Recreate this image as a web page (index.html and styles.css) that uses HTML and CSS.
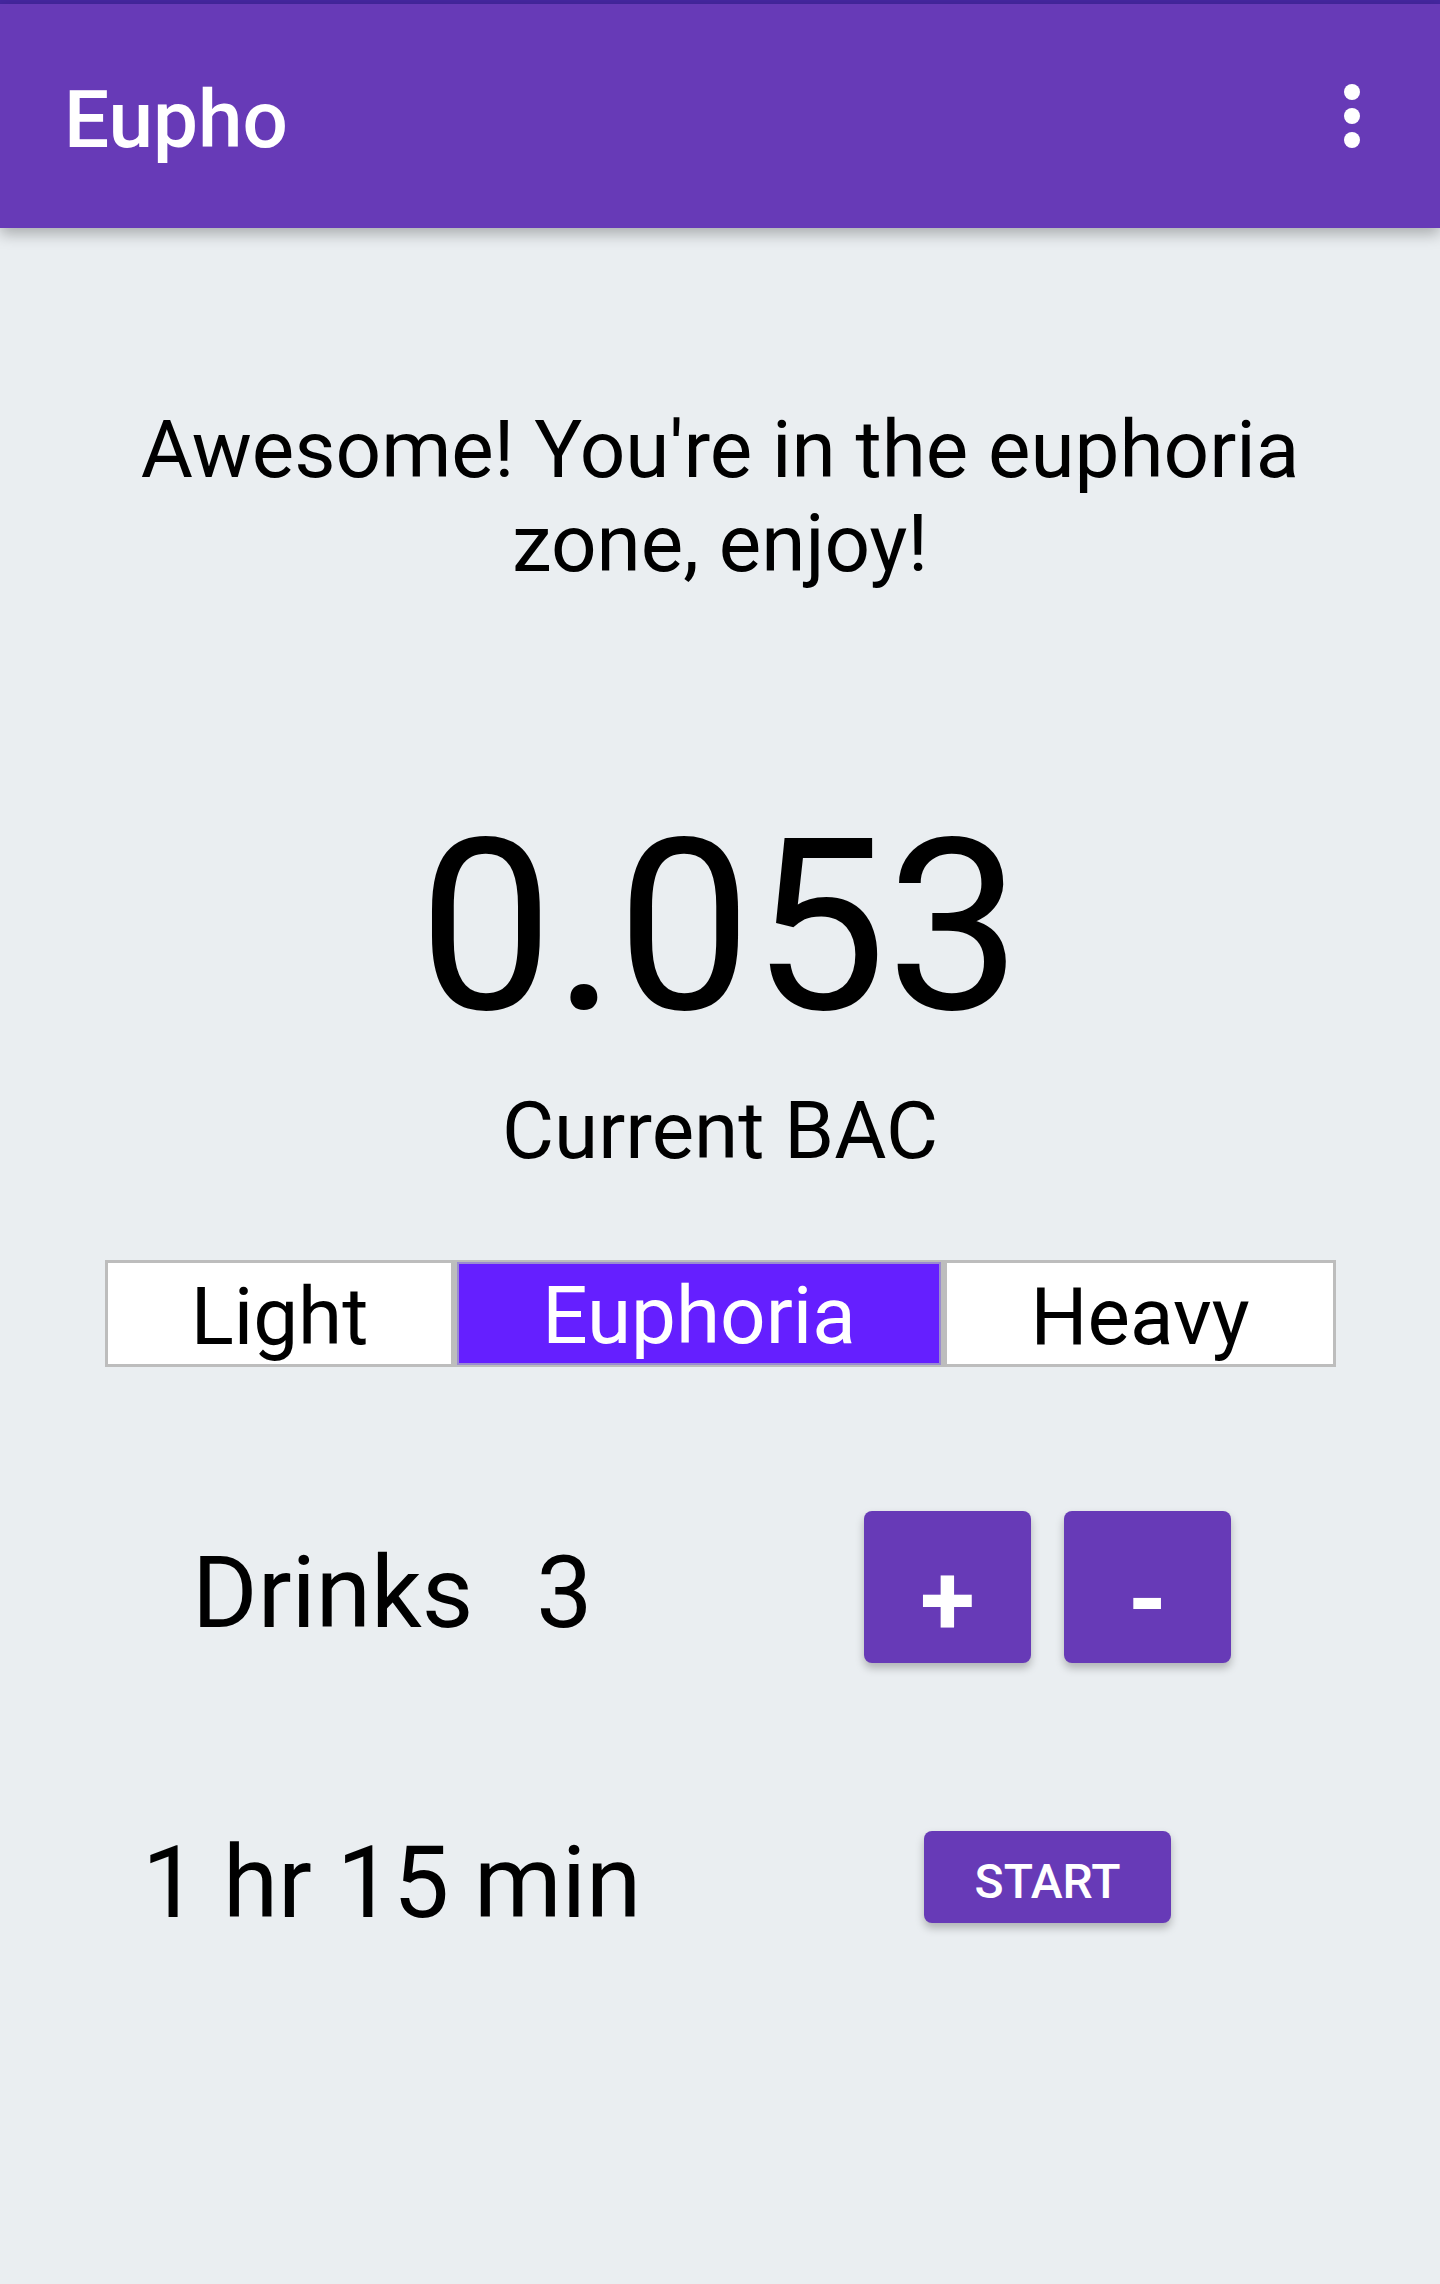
FILE: index.html
```html
<!DOCTYPE html>
<html lang="en">
<head>
    <meta charset="UTF-8">
    <meta name="viewport" content="width=device-width, initial-scale=1.0">
    <title>Eupho</title>
    <link rel="stylesheet" href="styles.css">
</head>
<body>
    <div class="status-strip"></div>
    <header class="app-bar">
        <span class="app-title">Eupho</span>
        <span class="menu-button">
            <span class="dot"></span>
            <span class="dot"></span>
            <span class="dot"></span>
        </span>
    </header>
    <main class="content">
        <p class="message">Awesome! You're in the euphoria zone, enjoy!</p>
        <div class="bac-value">0.053</div>
        <div class="bac-label">Current BAC</div>
        <div class="zones">
            <div class="zone">Light</div>
            <div class="zone zone-active">Euphoria</div>
            <div class="zone">Heavy</div>
        </div>
        <div class="drinks-row">
            <div class="drinks-text">
                <span>Drinks</span>
                <span class="drinks-count">3</span>
            </div>
            <div class="drinks-buttons">
                <button class="square-button" type="button">+</button>
                <button class="square-button" type="button">-</button>
            </div>
        </div>
        <div class="timer-row">
            <span class="timer-text">1 hr 15 min</span>
            <button class="start-button" type="button">START</button>
        </div>
    </main>
</body>
</html>
```

FILE: styles.css
```css
html {
    background-color: #eaeef1;
}
body {
    margin: 0;
    font-family: Roboto, "Noto Sans", sans-serif;
    color: #000;
    background-color: #eaeef1;
    min-height: 2284px;
}
.status-strip {
    height: 4px;
    background-color: #4527a0;
}
.app-bar {
    height: 224px;
    background-color: #673ab7;
    display: flex;
    align-items: center;
    justify-content: space-between;
    padding: 0 80px 0 64px;
    box-shadow: 0 6px 14px rgba(0, 0, 0, 0.28);
}
.app-title {
    color: white;
    font-size: 80px;
    font-weight: 500;
    line-height: 94px;
    padding-top: 8px;
}
.menu-button {
    display: flex;
    flex-direction: column;
    gap: 8px;
}
.dot {
    width: 16px;
    height: 16px;
    border-radius: 50%;
    background-color: white;
}
.message {
    margin: 175px 100px 0;
    font-size: 80px;
    line-height: 94px;
    text-align: center;
}
.bac-value {
    margin-top: 216px;
    font-size: 240px;
    line-height: 240px;
    text-align: center;
}
.bac-label {
    margin-top: 37px;
    font-size: 80px;
    line-height: 94px;
    text-align: center;
}
.zones {
    margin: 82px 104px 0 105px;
    height: 107px;
    box-sizing: border-box;
    padding: 3px;
    background-color: #bdbdbd;
    display: grid;
    grid-template-columns: 343fr 484fr 386fr;
    gap: 6px;
}
.zone {
    background-color: white;
    font-size: 80px;
    line-height: 93px;
    padding-top: 8px;
    text-align: center;
}
.zone-active {
    background-color: #651fff;
    color: white;
    border: 2px solid #9a8bd0;
    margin: -1px 0;
    line-height: 91px;
    padding-top: 7px;
}
.drinks-row {
    margin-top: 144px;
    height: 152px;
    display: flex;
    align-items: center;
    justify-content: space-between;
    padding: 0 209px 0 192px;
}
.drinks-text {
    font-size: 100px;
    padding-top: 10px;
}
.drinks-count {
    margin-left: 38px;
}
.drinks-buttons {
    display: flex;
    gap: 33px;
}
.square-button {
    width: 167px;
    height: 152px;
    border: none;
    border-radius: 8px;
    background-color: #673ab7;
    color: white;
    font-family: Roboto, sans-serif;
    font-size: 100px;
    font-weight: 700;
    padding: 24px 0 0;
    box-shadow: 0 5px 8px rgba(0, 0, 0, 0.25);
    cursor: pointer;
}
.timer-row {
    margin-top: 168px;
    height: 92px;
    display: flex;
    align-items: center;
    justify-content: space-between;
    padding: 0 269px 0 142px;
}
.timer-text {
    font-size: 100px;
    padding-top: 10px;
}
.start-button {
    width: 247px;
    height: 92px;
    border: none;
    border-radius: 8px;
    background-color: #673ab7;
    color: white;
    font-family: Roboto, sans-serif;
    font-size: 48px;
    font-weight: 500;
    padding: 9px 0 0;
    box-shadow: 0 5px 8px rgba(0, 0, 0, 0.25);
    cursor: pointer;
}
```
